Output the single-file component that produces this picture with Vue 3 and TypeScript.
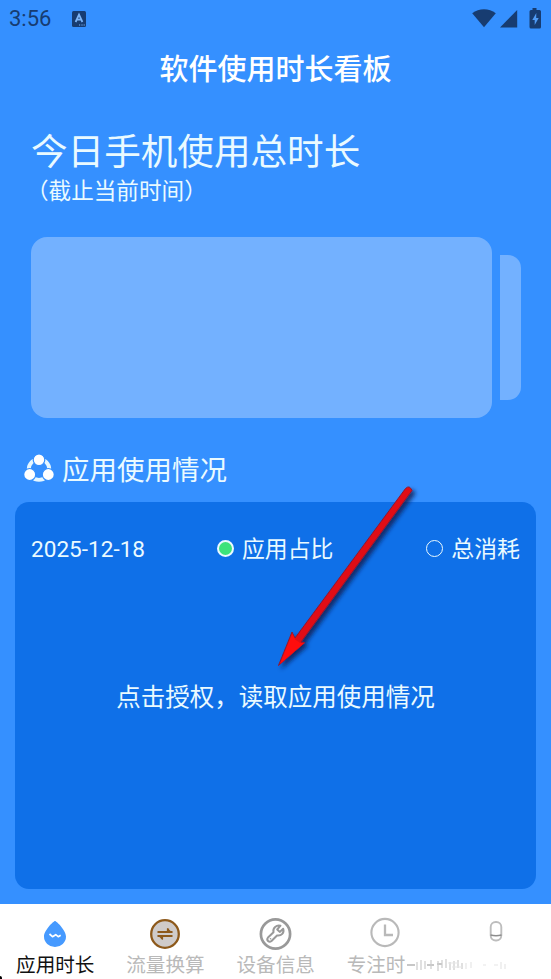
<script setup lang="ts">
interface Tab {
  id: string
  label: string
  active?: boolean
}

const tabs: Tab[] = [
  { id: 'drop', label: '应用时长', active: true },
  { id: 'swap', label: '流量换算' },
  { id: 'tool', label: '设备信息' },
  { id: 'clock', label: '专注时' },
  { id: 'user', label: '' },
]
</script>

<template>
  <div class="screen">
    <header class="status">
      <span class="time">3:56</span>
      <svg class="ime" width="14" height="16" viewBox="0 0 14 16">
        <rect width="14" height="16" rx="1.5" fill="#173c71" />
        <path d="M3.6 11 7 3.7 10.4 11M4.9 8.6h4.2" fill="none" stroke="#7db5f7" stroke-width="1.8" />
        <path d="M7 14h1.2M9.4 14h1.2M11.6 14h1.2" stroke="#7db5f7" stroke-width="1.2" />
      </svg>
      <svg class="signals" width="71" height="22" viewBox="0 0 71 22">
        <g fill="#173c71">
          <path d="M.2 5.2C7-.2 17-.2 23.800 5.200L12 19.200Z" />
          <path d="M28 19.500 45.200 2v17.500Z" />
          <path d="M60.500 0h4v2h3q1.500 0 1.500 1.500v15.500q0 1.500-1.500 1.500h-8.500q-1.500 0-1.500-1.500v-15.500Q57.500 2 59 2h1.500Z" />
        </g>
        <path d="m64.300 5-4 7h2.400v5l4-7h-2.500Z" fill="#4f9bf5" />
      </svg>
    </header>

    <h1 class="title">软件使用时长看板</h1>

    <section class="summary">
      <h2>今日手机使用总时长</h2>
      <p>（截止当前时间）</p>
    </section>

    <div class="carousel">
      <div class="slide"></div>
      <div class="next"></div>
    </div>

    <div class="section-head">
      <svg width="30" height="28" viewBox="0 0 30 28">
        <circle cx="15" cy="15.500" r="10.300" fill="none" stroke="#e6f7ff" stroke-width="3.800" />
        <g fill="#fff" stroke="#3590ff" stroke-width="1.200">
          <circle cx="15" cy="5.800" r="5.800" />
          <circle cx="5.700" cy="20.500" r="6" />
          <circle cx="24.300" cy="20.500" r="6" />
        </g>
      </svg>
      <h3>应用使用情况</h3>
    </div>

    <main class="panel">
      <div class="legend">
        <span class="date">2025-12-18</span>
        <span class="key share"><i class="dot filled"></i><span>应用占比</span></span>
        <span class="key"><i class="dot"></i><span>总消耗</span></span>
      </div>
      <p class="message">点击授权，读取应用使用情况</p>
    </main>

    <nav class="tabs">
      <div v-for="tab in tabs" :key="tab.id" class="tab" :class="[tab.id, { active: tab.active }]">
        <svg class="icon" width="34" height="34" viewBox="0 0 34 34">
          <template v-if="tab.id === 'drop'">
            <path d="M17 4C15.500 4 6 13.500 6 19.500a11 10.500 0 0 0 22 0C28 13.500 18.500 4 17 4Z" fill="#469aff" />
            <path d="m11.500 17 3 2.700 3.200-2 2.500 2 2.500-1.500" fill="none" stroke="#fff" stroke-width="1.700" stroke-linejoin="round" />
          </template>
          <template v-else-if="tab.id === 'swap'">
            <circle cx="17" cy="17" r="13.800" fill="#cfcbca" stroke="#8d591b" stroke-width="2.300" />
            <path d="M9.500 15h15M20 11.500v3.500M24.500 19H9.500M14 19v3.300" fill="none" stroke="#8d591b" stroke-width="2.200" />
            <path d="m19 11 5.500 4.500H19ZM15 23l-5.500-4.500H15Z" fill="#8d591b" />
          </template>
          <template v-else-if="tab.id === 'tool'">
            <circle cx="17.500" cy="17" r="14.600" fill="none" stroke="#999" stroke-width="2.700" />
            <path d="M22.500 8.700c-4-1-8 2-7 6.600L10 20.500c-2 2.500 1 5.500 3.500 3.500l5.500-5.500c4.500.8 7.500-3 6.200-6.800l-3.500 3.200-2.500-2.400Z" fill="none" stroke="#999" stroke-width="2" stroke-linejoin="round" />
            <circle cx="12.500" cy="21.800" r=".8" fill="#999" />
          </template>
          <template v-else-if="tab.id === 'clock'">
            <circle cx="16" cy="15.500" r="13.600" fill="none" stroke="#b9b9b9" stroke-width="2.100" />
            <path d="M16 7.500v10.500h8" fill="none" stroke="#b9b9b9" stroke-width="2.300" />
          </template>
          <template v-else>
            <rect x="11.700" y="5" width="10.600" height="18.500" rx="5" fill="none" stroke="#bdbdbd" stroke-width="1.900" />
            <path d="M11.500 18q5.500 1.500 11 0" fill="none" stroke="#8d8d8d" stroke-width="1.600" />
          </template>
        </svg>
        <span class="label">{{ tab.label }}</span>
      </div>
      <svg class="smudge" width="102" height="14" viewBox="0 0 102 14">
        <path d="M0 7h8M20 7h7M30 6h5" stroke="#b5b5b5" stroke-width="1.600" />
        <path d="M10 4v8M14 2v10M18 3v8M24 2v9M31 3v10M35 2v8M39 1v9M43 4v8M47 3v9M51 2v8M55 5v6" stroke="#ccc" stroke-width="1.200" />
        <path d="M41 5h11M45 9h10M59 5v6M64 4v6M76 7h3M87 7h4M94 4v7M98 6v5" stroke="#e6e6e6" stroke-width="1.200" />
      </svg>
      <i class="corner"></i>
    </nav>

    <svg class="pointer" width="150" height="200" viewBox="0 0 150 200">
      <defs>
        <filter id="shade" x="-20%" y="-20%" width="140%" height="140%">
          <feDropShadow dx="3" dy="3" stdDeviation="2" flood-color="#071f48" flood-opacity=".8" />
        </filter>
      </defs>
      <g filter="url(#shade)">
        <path d="M130.500 7.500Q134.500 3.500 137 9.500L26 161l3.500.5L3.500 184.500l13.500-33.500 3 6Z" fill="#e00d16" stroke="#8f1831" stroke-width="1" />
        <path d="m17.200 152.500 3 6 5 3.500 4.500-.2L5 183Z" fill="#ff0b08" />
      </g>
    </svg>
  </div>
</template>

<style>
body {
  margin: 0;
}
</style>

<style scoped>
.screen {
  position: relative;
  display: flex;
  flex-direction: column;
  width: 551px;
  height: 979px;
  overflow: hidden;
  background: #3590ff;
  color: #eafaff;
  font-family: "Noto Sans CJK SC", sans-serif;
}

h1,
h2,
h3,
p {
  margin: 0;
  font-weight: 400;
  white-space: nowrap;
}

.status {
  display: flex;
  align-items: center;
  height: 38px;
  padding: 0 10px 0 9px;
}

.time {
  width: 63px;
  color: #173c71;
  font: 22px/40px Roboto, sans-serif;
}

.ime {
  margin-top: -1px;
}

.signals {
  margin: -1px -2px 0 auto;
}

.title {
  height: 60px;
  color: #fff;
  font-size: 29px;
  font-weight: 500;
  line-height: 58px;
  text-align: center;
}

.summary {
  height: 139px;
  padding: 26px 31px 0;
  box-sizing: border-box;
}

h2 {
  font-size: 36.600px;
  line-height: 52px;
}

.summary p {
  margin-left: -5px;
  font-size: 22.600px;
  line-height: 27px;
}

.carousel {
  display: flex;
  align-items: center;
  gap: 8px;
  height: 181px;
  padding-left: 31px;
}

.slide {
  flex: none;
  width: 461px;
  height: 181px;
  border-radius: 16px;
  background: #73b1ff;
}

.next {
  flex: none;
  width: 20.500px;
  height: 145px;
  border-radius: 0 13px 13px 0;
  background: #73b1ff;
}

.section-head {
  display: flex;
  align-items: center;
  gap: 8px;
  height: 84px;
  padding: 16px 24px 0;
  box-sizing: border-box;
}

h3 {
  font-size: 27.500px;
  line-height: 38px;
}

.panel {
  height: 387px;
  margin: 0 15px;
  border-radius: 14px;
  background: #0f70e8;
}

.legend {
  display: flex;
  align-items: center;
  justify-content: space-between;
  height: 48px;
  padding: 22px 16px 0;
  font-size: 22.900px;
}

.date {
  margin-top: 2px;
  font-size: 22.600px;
  font-family: Roboto, sans-serif;
}

.key {
  display: flex;
  align-items: center;
  gap: 8px;
}

.key span {
  margin-top: -2px;
}

.share {
  margin-right: 21px;
}

.dot {
  width: 17px;
  height: 17px;
  box-sizing: border-box;
  border: 1.500px solid #eafaff;
  border-radius: 50%;
}

.filled {
  border-width: 2px;
  background: #3de37b;
}

.message {
  padding-top: 104px;
  font-size: 24.500px;
  line-height: 39px;
  text-align: center;
}

.tabs {
  position: relative;
  display: grid;
  grid-template-columns: repeat(5, 1fr);
  height: 75px;
  margin-top: 15px;
  background: #fff;
}

.tab {
  display: flex;
  flex-direction: column;
  align-items: center;
  padding-top: 13px;
  color: #b9b9b9;
  font-size: 19.600px;
}

.active {
  color: #111;
}

.label {
  width: 78px;
  line-height: 26px;
  white-space: nowrap;
}

.smudge {
  position: absolute;
  left: 407px;
  top: 54px;
}

.corner {
  position: absolute;
  left: 0;
  bottom: 0;
  width: 2px;
  height: 3px;
  background: #000;
  border-radius: 0 2px 0 0;
}

.pointer {
  position: absolute;
  left: 275px;
  top: 481px;
  pointer-events: none;
}
</style>
